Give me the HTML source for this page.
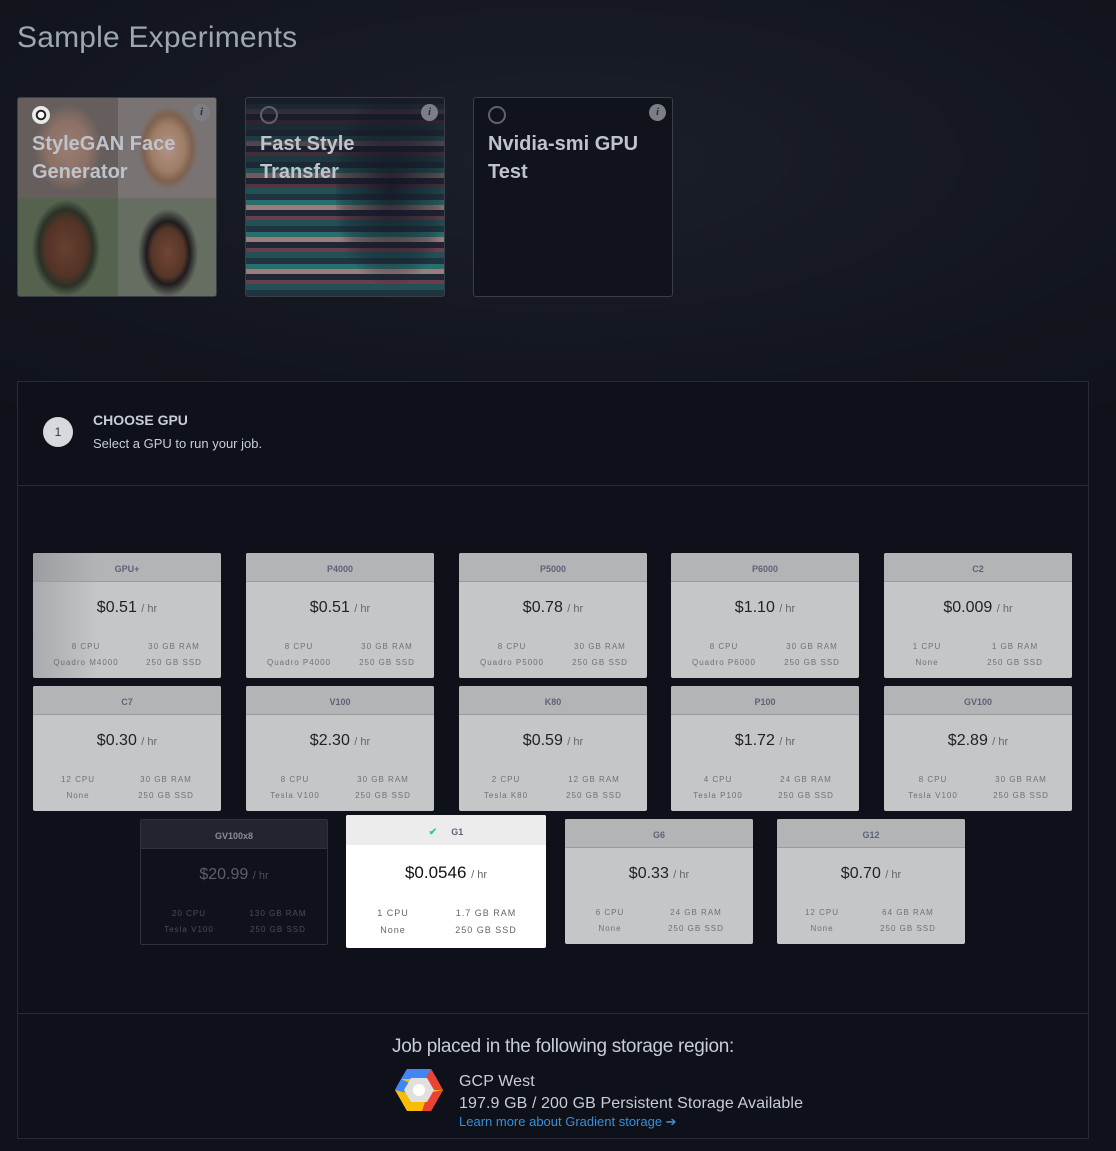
<!DOCTYPE html>
<html><head><meta charset="utf-8"><style>
*{margin:0;padding:0;box-sizing:border-box}
body{width:1116px;height:1151px;overflow:hidden;background:radial-gradient(ellipse 900px 340px at 560px 160px,#1b1f29 0%,#12151d 70%,#0f121a 100%);font-family:"Liberation Sans",sans-serif;position:relative}
.abs{position:absolute}
h1{position:absolute;left:17px;top:21px;font-weight:normal;font-size:30px;color:#9ea6b2;letter-spacing:0.2px}
.exp{position:absolute;top:97px;width:200px;height:200px;border:1px solid #3a3e47;border-radius:3px;overflow:hidden}
.exp .t{position:absolute;left:14px;top:32px;font-weight:bold;font-size:20px;line-height:28px;color:#bfc3cb}
.radio{position:absolute;left:14px;top:8px;width:18px;height:18px;border-radius:50%;border:2.5px solid #5e626b}
.info{position:absolute;right:6px;top:6px;width:17px;height:17px;border-radius:50%;background:#7b7e84;color:#2b2e35;font:italic bold 11px "Liberation Serif",serif;text-align:center;line-height:17px}
.box{position:absolute;left:17px;top:381px;width:1072px;height:758px;border:1px solid #262a33;background:#0e1119}
.card{position:absolute;width:188px;height:125px;border-radius:2px;background:#c5c6c8;overflow:hidden}
.card .h{height:29px;background:#b3b4b6;border-bottom:1px solid #9a9ba0;text-align:center;font-weight:bold;font-size:9px;color:#5e6278;line-height:32px}
.card .p{text-align:center;font-size:16px;color:#222;margin-top:17px;height:20px}
.card .p span{font-size:11px;color:#666}
.card .s{position:absolute;top:86px;width:100%;font-size:8px;letter-spacing:1px;color:#6f7175;line-height:16px}
.card .s div{position:absolute;text-align:center;width:90px}
.dark{background:#0f121a;border:1px solid #2e323b}
.dark .h{background:#22252d;border-bottom:1px solid #2e323b;color:#8a8d95}
.dark .p{color:#5b5f68}.dark .p span{color:#4a4e57}.dark .s{color:#4a4e57}
</style></head><body>
<h1>Sample Experiments</h1>

<div class="exp" style="left:17px;background:#777">
 <div class="abs" style="left:0;top:0;width:100px;height:100px;background:radial-gradient(ellipse 34px 44px at 50px 50px,#a98a7c 0%,#9b7b6e 60%,#6e6663 100%)"></div>
 <div class="abs" style="left:100px;top:0;width:100px;height:100px;background:radial-gradient(ellipse 30px 42px at 50px 50px,#c4a294 0%,#b08a6e 55%,#8a6a55 80%,#857f7d 100%)"></div>
 <div class="abs" style="left:0;top:100px;width:100px;height:100px;background:radial-gradient(ellipse 34px 48px at 48px 50px,#6e4430 0%,#5a3526 60%,#2b3326 80%,#5a6a52 100%)"></div>
 <div class="abs" style="left:100px;top:100px;width:100px;height:100px;background:radial-gradient(ellipse 30px 44px at 50px 55px,#7a4a35 0%,#5e3828 55%,#1e1a1c 72%,#6f7768 100%)"></div>
 <div class="abs" style="inset:0;background:rgba(40,44,52,0.12)"></div>
 <div class="radio" style="border-color:#e8e8e8;background:radial-gradient(circle,#fff 0 3px,#222 3.5px 5px,#eee 5.5px)"></div>
 <div class="info">i</div>
 <div class="t">StyleGAN Face<br>Generator</div>
</div>

<div class="exp" style="left:245px;background:repeating-linear-gradient(180deg,#1f3440 0 6px,#2a6e6c 6px 11px,#9c7c80 11px 16px,#1c2735 16px 22px,#6a3e4e 22px 26px,#245055 26px 32px);">
 <div class="abs" style="left:0;top:0;width:200px;height:90px;background:linear-gradient(180deg,rgba(24,26,38,0.9),rgba(24,26,38,0.25))"></div>
 <div class="abs" style="left:90px;top:0;width:110px;height:200px;background:radial-gradient(ellipse 60px 100px at 55px 90px,rgba(20,22,35,0.85),rgba(20,22,35,0.3) 80%,rgba(20,22,35,0))"></div>
 <div class="radio"></div><div class="info">i</div>
 <div class="t">Fast Style<br>Transfer</div>
</div>

<div class="exp" style="left:473px;background:#10131b">
 <div class="radio"></div><div class="info">i</div>
 <div class="t">Nvidia-smi GPU<br>Test</div>
</div>

<div class="box">
 <div class="abs" style="left:25px;top:35px;width:30px;height:30px;border-radius:50%;background:#d8d9dc;color:#333;font-size:12px;text-align:center;line-height:30px">1</div>
 <div class="abs" style="left:75px;top:30px;font-weight:bold;font-size:14px;color:#c7ccd6">CHOOSE GPU</div>
 <div class="abs" style="left:75px;top:54px;font-size:13px;color:#c7ccd6">Select a GPU to run your job.</div>
 <div class="abs" style="left:0;top:103px;width:1070px;height:1px;background:#262a33"></div>
 <div class="abs" style="left:0;top:631px;width:1070px;height:1px;background:#262a33"></div>
 <div class="abs" style="left:374px;top:654px;font-size:19px;color:#c7ccd6;letter-spacing:-0.3px">Job placed in the following storage region:</div>
 <svg class="abs" style="left:376px;top:685px" width="50" height="46" viewBox="0 0 50 46">
  <polygon points="13,2 37,2 49,23 37,44 13,44 1,23" fill="#fbbc05"/>
  <polygon points="13,2 37,2 43,12 7,12" fill="#4285f4"/>
  <polygon points="1,23 7,12 18,17 13,26" fill="#4285f4"/>
  <polygon points="49,23 37,44 28,44 34,26" fill="#ea4335"/>
  <polygon points="37,2 49,23 38,23 31,12" fill="#ea4335"/>
  <polygon points="17,11 33,11 40,23 33,35 17,35 10,23" fill="#e0e0e0"/>
  <circle cx="25" cy="23" r="6" fill="#fff"/>
 </svg>
 <div class="abs" style="left:441px;top:689px;font-size:16px;color:#c7ccd6;line-height:22px;letter-spacing:0.1px">GCP West<br>197.9 GB / 200 GB Persistent Storage Available</div>
 <div class="abs" style="left:441px;top:732px;font-size:13px;color:#3a8fd6">Learn more about Gradient storage ➔</div>
</div>

<div class="card" style="left:33px;top:553px;background:linear-gradient(90deg,#a9aaad,#c5c6c8 35%)"><div class="h" style="background:linear-gradient(90deg,#9c9da1,#b3b4b6 35%)">GPU+</div><div class="p">$0.51 <span>/ hr</span></div><div class="s"><div style="left:8px">8 CPU<br>Quadro M4000</div><div style="left:96px">30 GB RAM<br>250 GB SSD</div></div></div>
<div class="card" style="left:246px;top:553px"><div class="h">P4000</div><div class="p">$0.51 <span>/ hr</span></div><div class="s"><div style="left:8px">8 CPU<br>Quadro P4000</div><div style="left:96px">30 GB RAM<br>250 GB SSD</div></div></div>
<div class="card" style="left:459px;top:553px"><div class="h">P5000</div><div class="p">$0.78 <span>/ hr</span></div><div class="s"><div style="left:8px">8 CPU<br>Quadro P5000</div><div style="left:96px">30 GB RAM<br>250 GB SSD</div></div></div>
<div class="card" style="left:671px;top:553px"><div class="h">P6000</div><div class="p">$1.10 <span>/ hr</span></div><div class="s"><div style="left:8px">8 CPU<br>Quadro P6000</div><div style="left:96px">30 GB RAM<br>250 GB SSD</div></div></div>
<div class="card" style="left:884px;top:553px"><div class="h">C2</div><div class="p">$0.009 <span>/ hr</span></div><div class="s"><div style="left:-2px">1 CPU<br>None</div><div style="left:86px">1 GB RAM<br>250 GB SSD</div></div></div>

<div class="card" style="left:33px;top:686px"><div class="h">C7</div><div class="p">$0.30 <span>/ hr</span></div><div class="s"><div style="left:0px">12 CPU<br>None</div><div style="left:88px">30 GB RAM<br>250 GB SSD</div></div></div>
<div class="card" style="left:246px;top:686px"><div class="h">V100</div><div class="p">$2.30 <span>/ hr</span></div><div class="s"><div style="left:4px">8 CPU<br>Tesla V100</div><div style="left:92px">30 GB RAM<br>250 GB SSD</div></div></div>
<div class="card" style="left:459px;top:686px"><div class="h">K80</div><div class="p">$0.59 <span>/ hr</span></div><div class="s"><div style="left:2px">2 CPU<br>Tesla K80</div><div style="left:90px">12 GB RAM<br>250 GB SSD</div></div></div>
<div class="card" style="left:671px;top:686px"><div class="h">P100</div><div class="p">$1.72 <span>/ hr</span></div><div class="s"><div style="left:2px">4 CPU<br>Tesla P100</div><div style="left:90px">24 GB RAM<br>250 GB SSD</div></div></div>
<div class="card" style="left:884px;top:686px"><div class="h">GV100</div><div class="p">$2.89 <span>/ hr</span></div><div class="s"><div style="left:4px">8 CPU<br>Tesla V100</div><div style="left:92px">30 GB RAM<br>250 GB SSD</div></div></div>

<div class="card dark" style="left:140px;top:819px;height:126px"><div class="h">GV100x8</div><div class="p">$20.99 <span>/ hr</span></div><div class="s"><div style="left:3px">20 CPU<br>Tesla V100</div><div style="left:92px">130 GB RAM<br>250 GB SSD</div></div></div>
<div class="card" style="left:346px;top:815px;width:200px;height:133px;background:#fff"><div class="h" style="background:#ececec;border-bottom:none;height:30px;line-height:34px"><span style="color:#2ecc8f;font-size:10px;margin-right:14px">✔</span>G1</div><div class="p" style="margin-top:18px;font-size:17px;color:#111">$0.0546 <span>/ hr</span></div><div class="s" style="top:90px;font-size:9px;line-height:17px;color:#666"><div style="left:2px">1 CPU<br>None</div><div style="left:95px">1.7 GB RAM<br>250 GB SSD</div></div></div>
<div class="card" style="left:565px;top:819px"><div class="h">G6</div><div class="p">$0.33 <span>/ hr</span></div><div class="s"><div style="left:0px">6 CPU<br>None</div><div style="left:86px">24 GB RAM<br>250 GB SSD</div></div></div>
<div class="card" style="left:777px;top:819px"><div class="h">G12</div><div class="p">$0.70 <span>/ hr</span></div><div class="s"><div style="left:0px">12 CPU<br>None</div><div style="left:86px">64 GB RAM<br>250 GB SSD</div></div></div>
</body></html>
